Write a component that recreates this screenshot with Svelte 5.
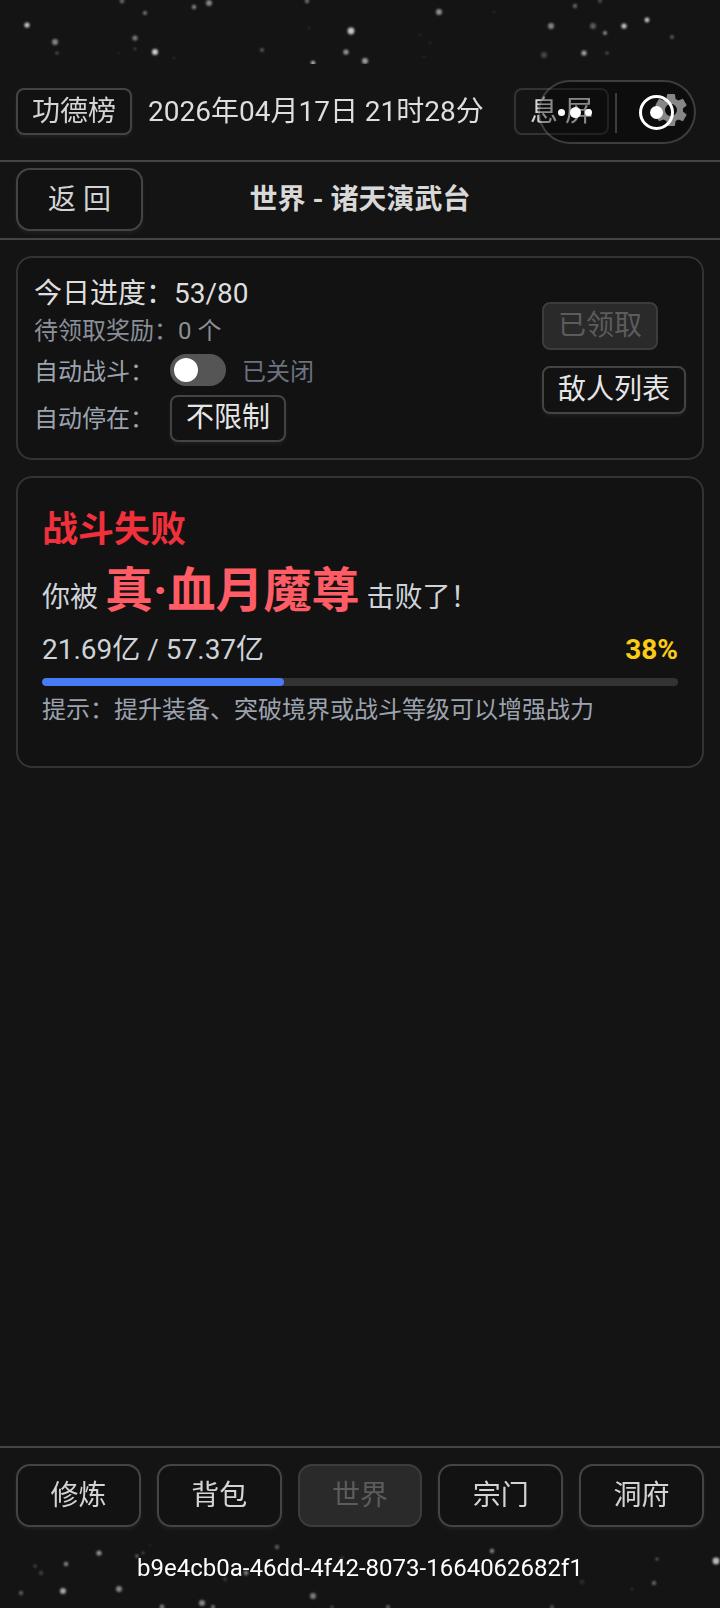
<script>
  const stars = [
    [27,25,2.6,.85],[55,42,3,.55],[57,53,1.6,.35],[135,38,2.6,.5],[135,49,1.2,.35],[155,52,3,.9],[145,13,2,.5],[194,7,2.2,.55],[209,3,3,.55],[122,1,2.4,.4],[307,1,2.2,.45],[351,31,3.4,.85],[346,52,2.6,.65],[262,50,2,.35],[313,63,2.2,.8],[309,28,1.4,.12],[174,58,1,.25],[119,53,1.2,.1],
    [439,12,3,.6],[365,61,3,.65],[575,6,2.2,.4],[551,26,3,.55],[593,26,3,.35],[624,26,2.6,.85],[647,20,2.4,.85],[605,33,2,.6],[672,37,2,.35],[584,53,2.6,.7],[544,55,3,.25],[607,53,1.6,.35],[430,43,1.4,.12],[420,35,1.6,.1],[424,57,1.4,.12],[494,12,1,.2],[600,1,2,.3],
    [99,1553,2.6,.6],[66,1564,2.2,.55],[35,1566,1.6,.3],[41,1573,2.2,.22],[63,1591,3,.7],[119,1589,3,.55],[21,1593,2.2,.35],[162,1607,2.4,.5],[202,1603,3,.55],[213,1607,2,.5],[313,1596,3,.5],[277,1547,2.2,.35],[246,1573,2.4,.5],[225,1579,2.4,.15],[137,1556,1.6,.5],[143,1553,1.2,.4],[342,1558,2,.15],[332,1607,1.6,.3],[150,1545,1,.15],
    [492,1551,2.2,.55],[657,1559,1.6,.4],[716,1561,3.4,.8],[654,1583,2.2,.4],[582,1582,2.4,.12],[632,1589,1.6,.12],[388,1607,2,.4],[552,1607,2,.3]
  ];
  const nav = [
    { label: '修炼' }, { label: '背包' }, { label: '世界', active: true }, { label: '宗门' }, { label: '洞府' }
  ];
</script>

<div class="page">
  <svg class="stars" width="720" height="1608" viewBox="0 0 720 1608" aria-hidden="true">
    <defs>
      <filter id="soft" x="-100%" y="-100%" width="300%" height="300%"><feGaussianBlur stdDeviation="1" /></filter>
      <clipPath id="bands"><rect x="0" y="0" width="720" height="64" /><rect x="0" y="1540" width="720" height="68" /></clipPath>
    </defs>
    <g clip-path="url(#bands)">
      <g filter="url(#soft)" opacity="0.9">
        {#each stars as s}
          <circle cx={s[0]} cy={s[1]} r={s[2]} fill="#fff" opacity={s[3]} />
        {/each}
      </g>
    </g>
  </svg>

  <header class="top">
    <div class="top-left">
      <button class="btn small">功德榜</button>
      <span class="date">2026年04月17日 21时28分</span>
    </div>
    <div class="top-right">
      <button class="btn small dim">息 屏</button>
      <svg class="gear" viewBox="0 0 24 24" width="40" height="40" aria-hidden="true">
        <path fill="#cfcfcf" fill-rule="evenodd" d="M19.14 12.94c.04-.3.06-.61.06-.94 0-.32-.02-.64-.07-.94l2.03-1.58c.18-.14.23-.41.12-.61l-1.92-3.32c-.12-.22-.37-.29-.59-.22l-2.39.96c-.5-.38-1.03-.7-1.62-.94l-.36-2.54c-.04-.24-.24-.41-.48-.41h-3.84c-.24 0-.43.17-.47.41l-.36 2.54c-.59.24-1.13.57-1.62.94l-2.39-.96c-.22-.08-.47 0-.59.22L2.74 8.87c-.12.21-.08.47.12.61l2.03 1.58c-.05.3-.09.63-.09.94s.02.64.07.94l-2.03 1.58c-.18.14-.23.41-.12.61l1.92 3.32c.12.22.37.29.59.22l2.39-.96c.5.38 1.03.7 1.62.94l.36 2.54c.05.24.24.41.48.41h3.84c.24 0 .44-.17.47-.41l.36-2.54c.59-.24 1.13-.56 1.62-.94l2.39.96c.22.08.47 0 .59-.22l1.92-3.32c.12-.22.07-.47-.12-.61l-2.01-1.58zM12 15.6c-1.98 0-3.6-1.62-3.6-3.6s1.62-3.6 3.6-3.6 3.6 1.62 3.6 3.6-1.62 3.6-3.6 3.6z" />
      </svg>
    </div>
  </header>

  <div class="capsule" aria-hidden="true">
    <div class="dots"><i class="d1"></i><i class="d2"></i><i class="d1"></i></div>
    <div class="sep"></div>
    <div class="target"><i></i></div>
  </div>

  <div class="subbar">
    <div><button class="btn large">返 回</button></div>
    <div class="title">世界 - 诸天演武台</div>
    <div></div>
  </div>

  <main class="main">
    <section class="card status">
      <div class="status-left">
        <div class="today">今日进度：<span class="val">53/80</span></div>
        <div class="pending">待领取奖励：<span class="val">0 个</span></div>
        <div class="auto-row">
          <span class="label">自动战斗：</span>
          <span class="switch"><i></i></span>
          <span class="off">已关闭</span>
        </div>
        <div class="stop-row">
          <span class="label">自动停在：</span>
          <button class="btn small bright">不限制</button>
        </div>
      </div>
      <div class="status-right">
        <button class="btn small disabled">已领取</button>
        <button class="btn small bright">敌人列表</button>
      </div>
    </section>

    <section class="card result">
      <div class="fail">战斗失败</div>
      <div class="defeat">你被 <span class="boss">真·血月魔尊</span> 击败了！</div>
      <div class="hp">
        <span>21.69亿 / 57.37亿</span>
        <span class="pct">38%</span>
      </div>
      <div class="bar"><div class="fill" style="width: 38%"></div></div>
      <div class="tip">提示：提升装备、突破境界或战斗等级可以增强战力</div>
    </section>
  </main>

  <footer class="foot">
    <nav class="nav">
      {#each nav as item}
        <button class="btn large" class:disabled={item.active}>{item.label}</button>
      {/each}
    </nav>
    <div class="uuid">b9e4cb0a-46dd-4f42-8073-1664062682f1</div>
  </footer>
</div>

<style>
  :global(body) {
    margin: 0;
    background: #141414;
  }
  .page {
    position: relative;
    width: 720px;
    height: 1608px;
    overflow: hidden;
    display: flex;
    flex-direction: column;
    background: #141414;
    color: #dedede;
    font-family: Roboto, "Noto Sans CJK SC", sans-serif;
  }
  .stars {
    position: absolute;
    left: 0;
    top: 0;
    pointer-events: none;
  }
  .btn {
    box-sizing: border-box;
    margin: 0;
    padding: 0;
    background: #121212;
    border: 2px solid #444;
    color: #d4d4d4;
    font-family: inherit;
    font-size: 28px;
    box-shadow: 0 2px 4px rgba(255, 255, 255, 0.06);
  }
  .btn.small {
    height: 47px;
    border-radius: 8px;
    padding: 0 14px;
    line-height: 1;
  }
  .btn.large {
    height: 63px;
    border-radius: 14px;
    line-height: 1;
  }
  .btn.bright {
    color: #e6e6e6;
  }
  .btn.dim {
    border-color: #333;
    color: #d4d4d4;
    box-shadow: none;
    background: transparent;
  }
  .btn.disabled {
    background: #2a2a2a;
    color: #5c5c5c;
    border-color: #3c3c3c;
    box-shadow: none;
  }
  .top {
    position: relative;
    box-sizing: border-box;
    height: 162px;
    padding: 88px 16px 25px 16px;
    display: flex;
    align-items: center;
    justify-content: space-between;
    border-bottom: 2px solid #444;
  }
  .top-left {
    display: flex;
    align-items: center;
    gap: 16px;
  }
  .date {
    font-size: 28px;
    line-height: 1;
    color: #dedede;
    white-space: nowrap;
  }
  .top-right {
    display: flex;
    align-items: center;
    gap: 42px;
    margin-right: 13px;
  }
  .top-right .dim {
    width: 95px;
    padding: 0;
  }
  .gear {
    margin-top: -3px;
    display: block;
  }
  .capsule {
    position: absolute;
    left: 538px;
    top: 80px;
    box-sizing: border-box;
    width: 158px;
    height: 64px;
    border-radius: 32px;
    border: 2px solid rgba(255, 255, 255, 0.2);
    background: rgba(0, 0, 0, 0.35);
  }
  .dots {
    position: absolute;
    left: 18px;
    top: 30px;
    width: 34px;
    height: 0;
    display: flex;
    align-items: center;
    justify-content: space-between;
  }
  .dots i {
    display: block;
    border-radius: 50%;
    background: #fff;
    flex: none;
  }
  .d1 {
    width: 7px;
    height: 7px;
  }
  .d2 {
    width: 11px;
    height: 11px;
  }
  .sep {
    position: absolute;
    left: 75px;
    top: 11px;
    width: 2px;
    height: 40px;
    background: rgba(255, 255, 255, 0.2);
  }
  .target {
    position: absolute;
    left: 99px;
    top: 13px;
    box-sizing: border-box;
    width: 35px;
    height: 35px;
    border: 3px solid #fff;
    border-radius: 50%;
    display: flex;
    align-items: center;
    justify-content: center;
  }
  .target i {
    display: block;
    width: 13px;
    height: 13px;
    border-radius: 50%;
    background: #fff;
  }
  .subbar {
    box-sizing: border-box;
    height: 78px;
    padding: 6px 16px 7px 16px;
    display: grid;
    grid-template-columns: 1fr auto 1fr;
    align-items: center;
    border-bottom: 2px solid #444;
  }
  .subbar .btn {
    width: 127px;
    display: block;
  }
  .title {
    font-size: 28px;
    line-height: 1;
    font-weight: 700;
    color: #d8d8d8;
    white-space: pre;
  }
  .main {
    flex: 1;
    padding: 16px;
    display: flex;
    flex-direction: column;
    gap: 16px;
  }
  .card {
    box-sizing: border-box;
    border: 2px solid #333;
    border-radius: 16px;
    background: #121212;
  }
  .status {
    height: 204px;
    padding: 16px;
    display: flex;
    justify-content: space-between;
    align-items: center;
  }
  .status-left {
    display: flex;
    flex-direction: column;
  }
  .today {
    font-size: 28px;
    line-height: 37px;
    padding-bottom: 1px;
    color: #dedede;
  }
  .pending {
    font-size: 24px;
    line-height: 36px;
    color: #8a8f98;
    margin-bottom: 5px;
  }
  .auto-row {
    height: 32px;
    display: flex;
    align-items: center;
    margin-bottom: 9px;
  }
  .stop-row {
    height: 47px;
    display: flex;
    align-items: center;
  }
  .stop-row .label {
    margin-top: -3px;
  }
  .label {
    font-size: 24px;
    color: #9ca3af;
    width: 136px;
    white-space: nowrap;
  }
  .switch {
    position: relative;
    width: 56px;
    height: 32px;
    border-radius: 16px;
    background: #555;
    display: block;
  }
  .switch i {
    position: absolute;
    left: 4px;
    top: 4px;
    width: 24px;
    height: 24px;
    border-radius: 50%;
    background: #fff;
  }
  .off {
    font-size: 24px;
    color: #6b7280;
    margin-left: 16px;
  }
  .status-right {
    display: flex;
    flex-direction: column;
    align-items: flex-start;
    gap: 16px;
  }
  .status-right .btn {
    height: 48px;
  }
  .result {
    height: 292px;
    padding: 24px;
  }
  .fail {
    margin-top: 2px;
    font-size: 36px;
    font-weight: 700;
    line-height: 52px;
    color: #f0303a;
    margin-bottom: 5px;
  }
  .defeat {
    font-size: 28px;
    line-height: 60px;
    height: 60px;
    color: #cfd3d9;
    white-space: pre;
  }
  .boss {
    font-size: 48px;
    font-weight: 700;
    color: #ff5c66;
  }
  .hp {
    margin-top: 9px;
    font-size: 28px;
    line-height: 40px;
    color: #cfd3d9;
    display: flex;
    justify-content: space-between;
    align-items: center;
  }
  .pct {
    font-size: 28px;
    font-weight: 700;
    color: #facc15;
  }
  .bar {
    margin-top: 8px;
    height: 8px;
    border-radius: 4px;
    background: #333;
    overflow: hidden;
  }
  .fill {
    height: 100%;
    border-radius: 4px;
    background: #4a7bf7;
  }
  .tip {
    margin-top: 6px;
    font-size: 24px;
    line-height: 36px;
    color: #9ca3af;
  }
  .foot {
    position: relative;
    box-sizing: border-box;
    height: 162px;
    border-top: 2px solid #444;
    padding: 16px 16px 0 16px;
  }
  .nav {
    display: grid;
    grid-template-columns: repeat(5, 1fr);
    gap: 16px;
  }
  .uuid {
    margin-top: 24px;
    font-size: 24px;
    line-height: 34px;
    color: #fff;
    text-align: center;
  }
</style>
